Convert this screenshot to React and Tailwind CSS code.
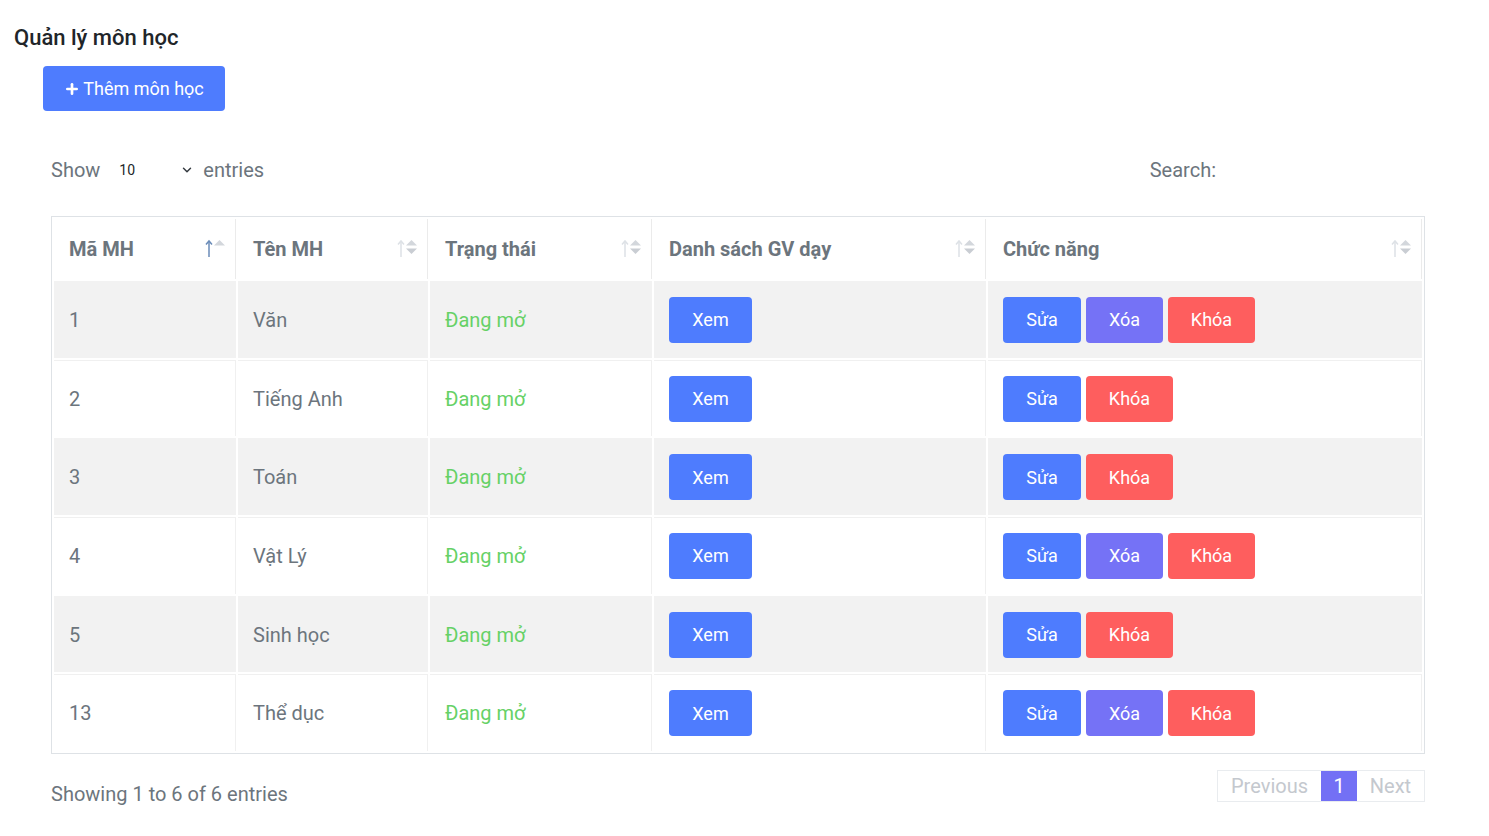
import { Plus, ChevronDown } from "lucide-react";

const subjects = [
  { id: 1, name: "Văn", locked: true },
  { id: 2, name: "Tiếng Anh", locked: false },
  { id: 3, name: "Toán", locked: false },
  { id: 4, name: "Vật Lý", locked: true },
  { id: 5, name: "Sinh học", locked: false },
  { id: 13, name: "Thể dục", locked: true },
];

const columns = [
  { title: "Mã MH", width: "w-[182px]", active: true },
  { title: "Tên MH", width: "w-[190px]" },
  { title: "Trạng thái", width: "w-[222px]" },
  { title: "Danh sách GV dạy", width: "w-[332px]" },
  { title: "Chức năng", width: "w-[434px]" },
];

export default function App() {
  return (
    <div className="min-h-screen bg-white font-['Roboto',sans-serif] text-[#6c757d]">
      {/* Header */}
      <h1 className="pl-[14px] pt-[25px] text-[22px] leading-[26px] font-medium text-[#212529]">
        Quản lý môn học
      </h1>
      <button className="ml-[43px] mt-[15px] flex h-[45px] w-[182px] items-center justify-center gap-[3px] rounded-[4px] bg-[#4e7cfe] text-[18px] text-white">
        <Plus size={16} strokeWidth={4} />
        Thêm môn học
      </button>

      <div className="ml-[51px] w-[1374px]">
        {/* Controls */}
        <div className="mt-[44px] flex h-[30px] items-center justify-between text-[20px]">
          <div className="flex items-center">
            <span>Show</span>
            <span className="ml-[10px] flex w-[87px] items-center justify-between pl-[9px] pr-[3px] text-[14px] text-[#212529]">
              10
              <ChevronDown size={14} strokeWidth={2.5} className="text-[#343a40]" />
            </span>
            <span className="ml-[6px]">entries</span>
          </div>
          <div className="flex items-center gap-[6px]">
            <span>Search:</span>
            <input className="h-[30px] w-[203px] outline-none" />
          </div>
        </div>

        {/* Table */}
        <table className="mt-[31px] w-[1374px] table-fixed border-separate border-spacing-[2px] border border-[#dee2e6] text-[20px]">
          <thead>
            <tr>
              {columns.map((c) => (
                <th
                  key={c.title}
                  className={`${c.width} relative h-[60px] border-r border-[#ebebeb] pl-[15px] text-left font-bold text-[#6c757d]`}
                >
                  {c.title}
                  <SortIcon active={c.active} />
                </th>
              ))}
            </tr>
          </thead>
          <tbody>
            {subjects.map((s, i) => (
              <Row key={s.id} s={s} striped={i % 2 === 0} />
            ))}
          </tbody>
        </table>

        {/* Footer */}
        <div className="mt-[16px] flex items-start justify-between">
          <span className="pt-[13px] text-[20px] leading-[22px]">Showing 1 to 6 of 6 entries</span>
          <div className="flex h-[32px] border border-[#e9ecef] text-[20px] text-[#c4c8ce]">
            <span className="flex w-[103px] items-center justify-center">Previous</span>
            <span className="flex w-[36px] items-center justify-center bg-[#7370f5] text-white">1</span>
            <span className="flex w-[67px] items-center justify-center">Next</span>
          </div>
        </div>
      </div>
    </div>
  );
}

function Row({ s, striped }) {
  const cell = `h-[76.7px] border-t border-r pl-[15px] ${
    striped ? "bg-[#f2f2f2] border-[#f2f2f2]" : "bg-white border-[#f0f0f0]"
  }`;
  return (
    <tr>
      <td className={cell}>{s.id}</td>
      <td className={cell}>{s.name}</td>
      <td className={`${cell} text-[#66d166]`}>Đang mở</td>
      <td className={cell}>
        <Btn color="bg-[#4e7cfe]" w="w-[83px]">Xem</Btn>
      </td>
      <td className={cell}>
        <div className="flex gap-[5px]">
          <Btn color="bg-[#4e7cfe]" w="w-[78px]">Sửa</Btn>
          {s.locked && (
            <Btn color="bg-[#7572f6]" w="w-[77px]">Xóa</Btn>
          )}
          <Btn color="bg-[#fe5e5e]" w="w-[87px]">Khóa</Btn>
        </div>
      </td>
    </tr>
  );
}

function Btn({ color, w, children }) {
  return (
    <button
      className={`${color} ${w} flex h-[46px] items-center justify-center rounded-[4px] text-[18px] text-white`}
    >
      {children}
    </button>
  );
}

function SortIcon({ active }) {
  return (
    <svg
      width="22"
      height="20"
      viewBox="0 0 22 20"
      className="absolute right-[9px] top-[19px]"
    >
      <g stroke={active ? "#6a8bb8" : "#dde1e6"} strokeWidth="1.5" fill="none">
        <path d="M5 19V3" />
        <path d="M2 6.5 5 3 8 6.5" />
      </g>
      <path d="M10 7.5 15.5 2 21 7.5Z" fill="#d3d7dc" />
      {!active && <path d="M10 10.5 15.5 16 21 10.5Z" fill="#c9cdd3" />}
    </svg>
  );
}
